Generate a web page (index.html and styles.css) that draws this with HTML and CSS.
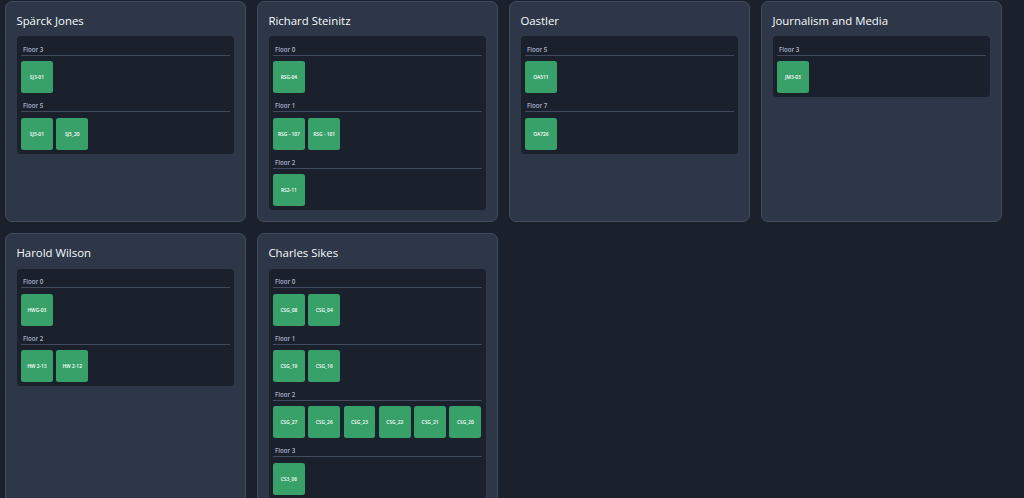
FILE: index.html
```html
<!DOCTYPE html>
<html lang="en">
<head>
<meta charset="utf-8">
<title>Buildings</title>
<link rel="stylesheet" href="styles.css">
</head>
<body>
<main class="grid">
  <section class="card">
    <h2 class="title">Spärck Jones</h2>
    <div class="panel">
      <div class="floor"><h3 class="label">Floor 3</h3><div class="rooms"><div class="room">SJ3-01</div></div></div>
      <div class="floor"><h3 class="label">Floor 5</h3><div class="rooms"><div class="room">SJ5-01</div><div class="room">SJ5_20</div></div></div>
    </div>
  </section>
  <section class="card">
    <h2 class="title">Richard Steinitz</h2>
    <div class="panel">
      <div class="floor"><h3 class="label">Floor 0</h3><div class="rooms"><div class="room">RSG-04</div></div></div>
      <div class="floor"><h3 class="label">Floor 1</h3><div class="rooms"><div class="room">RSG - 107</div><div class="room">RSG - 101</div></div></div>
      <div class="floor"><h3 class="label">Floor 2</h3><div class="rooms"><div class="room">RS2-11</div></div></div>
    </div>
  </section>
  <section class="card">
    <h2 class="title">Oastler</h2>
    <div class="panel">
      <div class="floor"><h3 class="label">Floor 5</h3><div class="rooms"><div class="room">OA511</div></div></div>
      <div class="floor"><h3 class="label">Floor 7</h3><div class="rooms"><div class="room">OA726</div></div></div>
    </div>
  </section>
  <section class="card">
    <h2 class="title">Journalism and Media</h2>
    <div class="panel">
      <div class="floor"><h3 class="label">Floor 3</h3><div class="rooms"><div class="room">JM3-03</div></div></div>
    </div>
  </section>
  <section class="card">
    <h2 class="title">Harold Wilson</h2>
    <div class="panel">
      <div class="floor"><h3 class="label">Floor 0</h3><div class="rooms"><div class="room">HWG-03</div></div></div>
      <div class="floor"><h3 class="label">Floor 2</h3><div class="rooms"><div class="room">HW 2-13</div><div class="room">HW 2-12</div></div></div>
    </div>
  </section>
  <section class="card">
    <h2 class="title">Charles Sikes</h2>
    <div class="panel">
      <div class="floor"><h3 class="label">Floor 0</h3><div class="rooms"><div class="room">CSG_08</div><div class="room">CSG_04</div></div></div>
      <div class="floor"><h3 class="label">Floor 1</h3><div class="rooms"><div class="room">CSG_19</div><div class="room">CSG_16</div></div></div>
      <div class="floor"><h3 class="label">Floor 2</h3><div class="rooms"><div class="room">CSG_27</div><div class="room">CSG_26</div><div class="room">CSG_23</div><div class="room">CSG_22</div><div class="room">CSG_21</div><div class="room">CSG_20</div></div></div>
      <div class="floor"><h3 class="label">Floor 3</h3><div class="rooms"><div class="room">CS3_06</div></div></div>
    </div>
  </section>
</main>
</body>
</html>
```
FILE: styles.css
```css
html, body {
  margin: 0;
  height: 100%;
  overflow: hidden;
  background: #1a202c;
}
body {
  font-family: "Open Sans", "Noto Sans", sans-serif;
}
.grid {
  display: grid;
  grid-template-columns: repeat(4, 241px);
  gap: 11px;
  align-items: stretch;
  padding: 1px 0 0 5px;
}
.card {
  background: #2d3748;
  border: 1px solid #414c5e;
  border-radius: 7px;
  padding: 11px 11px 11px;
  box-sizing: border-box;
}
.title {
  margin: 0 0 7.4px -0.6px;
  font-size: 11.4px;
  line-height: 16px;
  font-weight: 500;
  color: #f7fafc;
}
.panel {
  background: #1a202c;
  border-radius: 4px;
  padding: 4.6px 4px 4px;
  display: flex;
  flex-direction: column;
  gap: 4px;
}
.label {
  margin: 0 0 5.4px;
  height: 15px;
  padding: 5px 0 0 2px;
  box-sizing: border-box;
  border-bottom: 1px solid #414c5e;
  font-size: 6.2px;
  line-height: 8px;
  font-weight: 600;
  color: #a9b6cb;
}
.rooms {
  display: flex;
  gap: 3.5px;
}
.room {
  width: 31.8px;
  height: 32px;
  flex: none;
  background: #38a169;
  border-radius: 2.5px;
  display: flex;
  align-items: center;
  justify-content: center;
  font-size: 4.9px;
  font-weight: 600;
  color: #ffffff;
  white-space: nowrap;
}
```
